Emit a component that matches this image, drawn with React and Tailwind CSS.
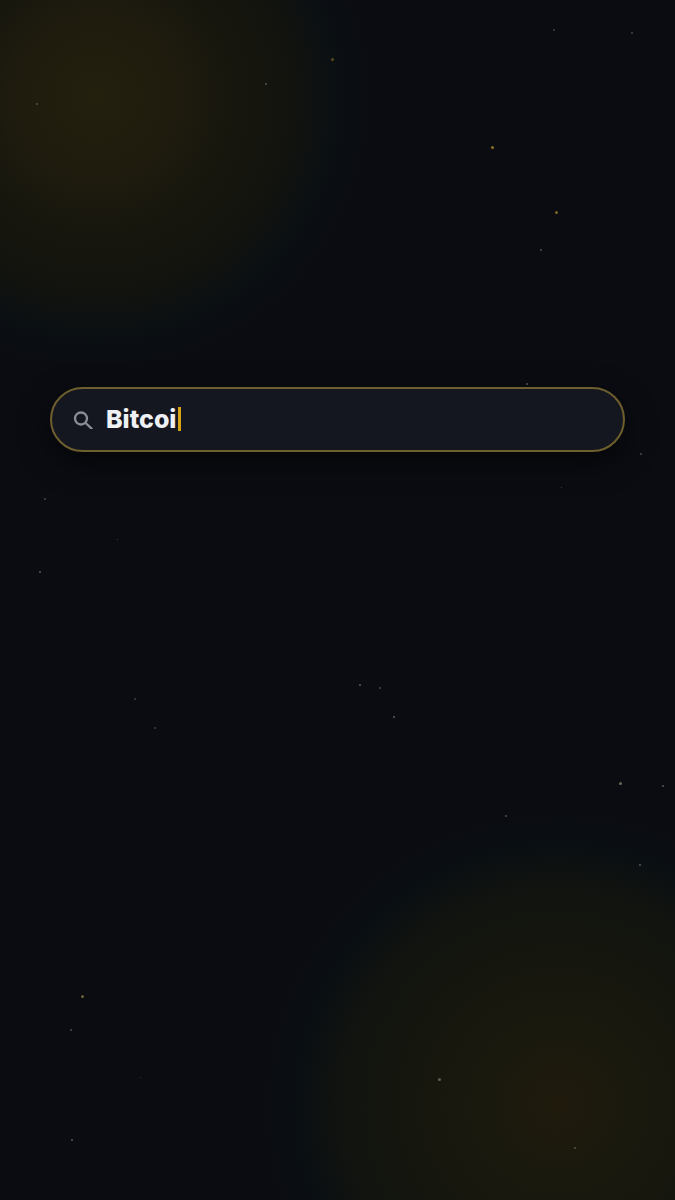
import React from "react";

const stars = [
  [332, 59, 3, "#5a4a1c"], [266, 84, 2, "#4b4f55"], [37, 104, 2, "#55544a"], [492, 147, 3, "#8a7426"],
  [556, 212, 3, "#77651f"], [541, 250, 2, "#4b4f55"], [554, 30, 2, "#3d4147"], [632, 33, 2, "#45494f"],
  [527, 384, 2, "#55595f"], [641, 454, 2, "#4b4f55"], [561, 487, 1, "#4b4f55"], [45, 499, 2, "#45494f"],
  [117, 539, 1, "#45494f"], [40, 572, 2, "#5a5c58"], [360, 685, 2, "#5a5c5e"], [380, 688, 2, "#45494f"],
  [394, 717, 2, "#5a5c5e"], [135, 699, 2, "#3d4147"], [155, 728, 2, "#3d4147"], [620, 783, 3, "#6a6a58"],
  [663, 786, 2, "#55595f"], [506, 816, 2, "#4b4f55"], [640, 865, 2, "#55595f"], [82, 996, 3, "#6a6238"],
  [71, 1030, 2, "#4b4f55"], [140, 1077, 1, "#3d4147"], [72, 1140, 2, "#5a5c5e"], [439, 1079, 3, "#5e5e52"],
  [575, 1148, 2, "#55543c"],
];

const App = () => {
  return (
    <div className="relative h-[1200px] w-[675px] overflow-hidden bg-[#0a0c12] font-['Inter','Liberation_Sans',sans-serif]">
      {/* glows */}
      <div className="absolute left-[-173px] top-[-173px] h-[540px] w-[540px] rounded-full bg-[radial-gradient(circle_closest-side,#24200e_0%,#1f1c0e_28%,#18170e_48%,#12130e_72%,#0b1013_88%,#0a0c12_100%)]" />
      <div className="absolute left-[268px] top-[815px] h-[580px] w-[580px] rounded-full bg-[radial-gradient(circle_closest-side,#1f1a0c_0%,#1a190e_26%,#15160e_54%,#10130f_76%,#0a0f13_90%,#0a0c12_100%)]" />

      {stars.map(([x, y, size, color]) => (
        <div
          key={`${x}-${y}`}
          className="absolute rounded-full"
          style={{ left: x - size / 2, top: y - size / 2, width: size, height: size, backgroundColor: color }}
        />
      ))}

      {/* search bar */}
      <div className="relative px-[50px] pt-[387px]">
        <div className="flex h-[65px] items-center rounded-full border-2 border-[#6f5f2e] bg-[#14171f] pl-[21px] shadow-[0_10px_30px_rgba(0,0,0,0.55)]">
          <svg width="20" height="20" viewBox="0 0 20 20" fill="none" stroke="#8b8d98" strokeWidth="2.3" strokeLinecap="round" className="mb-[1px]">
            <circle cx="8" cy="9.5" r="6" />
            <path d="M12.6 14 L18.6 19.6" />
          </svg>
          <span className="mb-[1px] ml-[13px] text-[25px] font-extrabold leading-none text-[#eef0f4]">Bitcoi</span>
          <span className="mb-[1px] ml-[2px] h-[24px] w-[3px] bg-[#d9a413]" />
        </div>
      </div>
    </div>
  );
};

export default App;
